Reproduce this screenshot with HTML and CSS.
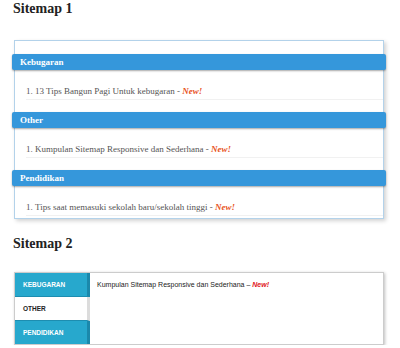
FILE: index.html
```html
<!DOCTYPE html>
<html>
<head>
<meta charset="utf-8">
<link rel="stylesheet" href="styles.css">
</head>
<body>
<div class="page">
  <h2 class="title">Sitemap 1</h2>
  <div class="sitemap">
    <div class="section">
      <div class="cat">Kebugaran</div>
      <ol class="posts"><li>13 Tips Bangun Pagi Untuk kebugaran - <span class="new">New!</span></li></ol>
    </div>
    <div class="section">
      <div class="cat">Other</div>
      <ol class="posts"><li>Kumpulan Sitemap Responsive dan Sederhana - <span class="new">New!</span></li></ol>
    </div>
    <div class="section">
      <div class="cat">Pendidikan</div>
      <ol class="posts"><li>Tips saat memasuki sekolah baru/sekolah tinggi - <span class="new">New!</span></li></ol>
    </div>
  </div>

  <h2 class="title title-2">Sitemap 2</h2>
  <div class="tabs">
    <div class="tab-list">
      <div class="tab">KEBUGARAN</div>
      <div class="tab active">OTHER</div>
      <div class="tab">PENDIDIKAN</div>
    </div>
    <div class="tab-panel">Kumpulan Sitemap Responsive dan Sederhana – <span class="new2">New!</span></div>
  </div>
</div>
</body>
</html>
```

FILE: styles.css
```css
html, body {
  margin: 0;
  padding: 0;
  background: #ffffff;
}

.page {
  padding: 0 0 0 13px;
  font-family: "Liberation Serif", "Times New Roman", serif;
}

.title {
  margin: 0 0 22px 0;
  font-size: 14px;
  line-height: 18px;
  font-weight: bold;
  color: #222;
}

.title-2 {
  margin-top: 16px;
  margin-bottom: 19px;
}

.sitemap {
  margin-left: 1px;
  width: 368px;
  border: 1px solid #b3d2ea;
  box-shadow: 2px 2px 4px rgba(0, 0, 0, 0.18);
  padding: 13px 0 2px 0;
  background: #fff;
}

.cat {
  margin: 0 -3px 0 -3px;
  height: 16px;
  line-height: 16px;
  padding-left: 8px;
  background: #3597db;
  color: #fff;
  font-size: 9px;
  font-weight: bold;
  border-radius: 2px;
  box-shadow: 0 1px 2px rgba(0, 0, 0, 0.35);
}

.posts {
  margin: 13px 0 12px 11px;
  padding: 0;
  list-style: decimal inside;
}

.section:last-child .posts {
  margin-bottom: 0;
}

.posts li {
  line-height: 16px;
  font-size: 9px;
  color: #555;
  border-bottom: 1px solid #f1f1f1;
}

.new {
  color: #e8531c;
  font-style: italic;
  font-weight: bold;
}

.tabs {
  margin-left: 1px;
  width: 368px;
  display: flex;
  border: 1px solid #cccccc;
  box-shadow: 1px 1px 3px rgba(0, 0, 0, 0.25);
  background: #fff;
}

.tab-list {
  width: 75px;
  display: flex;
  flex-direction: column;
}

.tab {
  height: 23px;
  line-height: 23px;
  padding-left: 8px;
  background: #27a8cd;
  color: #fff;
  font-family: "Liberation Sans", Arial, sans-serif;
  font-size: 6.5px;
  font-weight: bold;
  border-right: 3px solid #1b88ab;
  border-bottom: 1px solid #1d8db0;
}

.tab:last-child {
  border-bottom: none;
}

.tab.active {
  background: #fff;
  color: #222;
  border-right: 3px solid #dcdcdc;
}

.tab-panel {
  flex: 1;
  padding: 7px 7px;
  font-family: "Liberation Sans", Arial, sans-serif;
  font-size: 7px;
  line-height: 10px;
  color: #222;
}

.new2 {
  color: #e0161b;
  font-style: italic;
  font-weight: bold;
}
```
